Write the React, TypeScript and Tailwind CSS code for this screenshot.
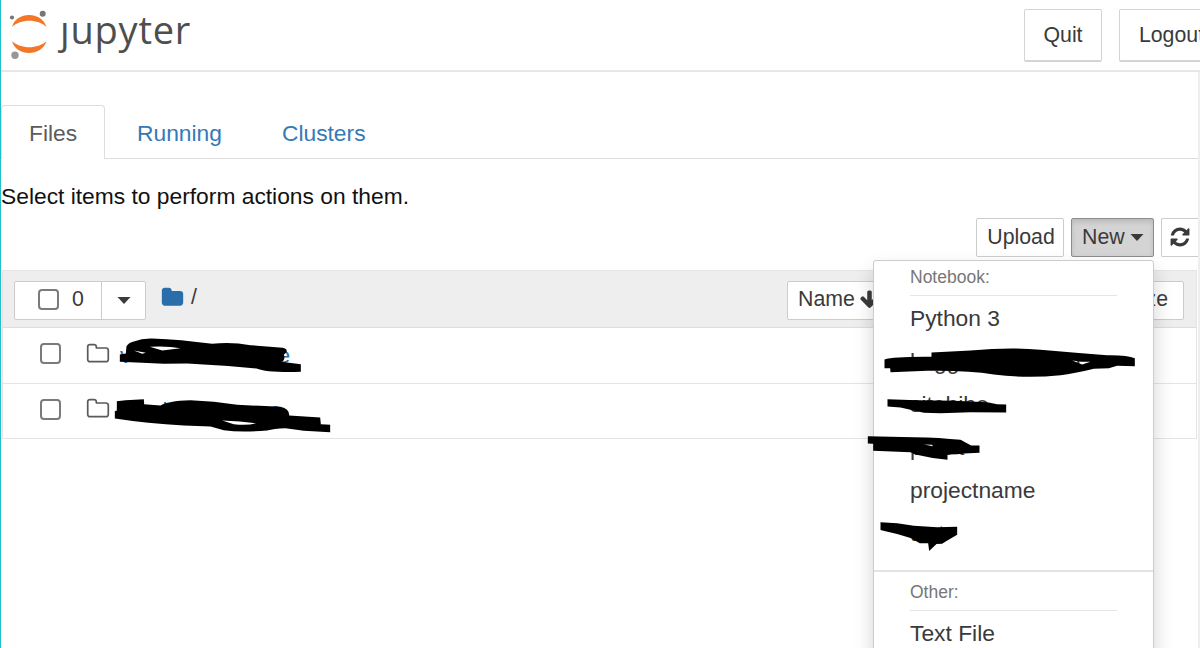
import type { ReactNode } from 'react';

/* ---------- icons ---------- */

const ICONS = {
  folder:
    'M1728 608v704q0 92-66 158t-158 66h-1216q-92 0-158-66t-66-158v-960q0-92 66-158t158-66h320q92 0 158 66t66 158v32h672q92 0 158 66t66 158z',
  folderOutline:
    'M1600 1312v-704q0-40-28-68t-68-28h-704q-40 0-68-28t-28-68v-64q0-40-28-68t-68-28h-320q-40 0-68 28t-28 68v960q0 40 28 68t68 28h1216q40 0 68-28t28-68zm128-704v704q0 92-66 158t-158 66h-1216q-92 0-158-66t-66-158v-960q0-92 66-158t158-66h320q92 0 158 66t66 158v32h672q92 0 158 66t66 158z',
  refresh:
    'M1639 1056q0 5-1 7-64 268-268 434.5t-478 166.5q-146 0-282.5-55t-243.5-157l-129 129q-19 19-45 19t-45-19-19-45v-448q0-26 19-45t45-19h448q26 0 45 19t19 45-19 45l-137 137q71 66 161 102t187 36q134 0 250-65t186-179q11-17 53-117 8-23 30-23h192q13 0 22.5 9.5t9.5 22.5zm25-800v448q0 26-19 45t-45 19h-448q-26 0-45-19t-19-45 19-45l138-138q-148-137-349-137-134 0-250 65t-186 179q-11 17-53 117-8 23-30 23h-199q-13 0-22.5-9.5t-9.5-22.5v-7q65-268 270-434.5t480-166.5q146 0 284 55.5t245 156.5l130-129q19-19 45-19t45 19 19 45z',
  arrowDown:
    'M1675 832q0 53-37 90l-651 652q-39 37-91 37-53 0-90-37l-651-652q-38-36-38-90 0-53 38-91l74-75q39-37 91-37 53 0 90 37l294 294v-704q0-52 38-90t90-38h128q52 0 90 38t38 90v704l294-294q37-37 90-37 52 0 91 37l75 75q37 39 37 91z',
};

function Icon({ name, className }: { name: keyof typeof ICONS; className: string }) {
  return (
    <svg viewBox="0 0 1792 1792" fill="currentColor" className={`shrink-0 ${className}`} aria-hidden="true">
      <path d={ICONS[name]} />
    </svg>
  );
}

function Caret() {
  return (
    <svg viewBox="0 0 14 7" className="w-3.5 h-[7px] shrink-0" fill="currentColor" aria-hidden="true">
      <path d="M0.500 0h13L7 7z" />
    </svg>
  );
}

function Checkbox() {
  return <span className="block size-[21px] shrink-0 rounded-[4px] border-2 border-[#7b7b7b] bg-white" />;
}

function Logo() {
  return (
    <div className="flex">
      <svg viewBox="1 0 48 60" className="w-12 h-[60px]" aria-hidden="true">
        <path d="M12 27C16 11 42 11 46.500 27C38 18.700 20.500 18.700 12 27z" fill="#f37726" />
        <path d="M12 41C20.500 49.300 38 49.300 46.500 41C42 57 16 57 12 41z" fill="#f37726" />
        <circle cx="12" cy="17.500" r="2.100" fill="#767677" />
        <circle cx="42.700" cy="13.800" r="3" fill="#767677" />
        <circle cx="15" cy="55.300" r="3.700" fill="#989798" />
      </svg>
      <span className="ml-[11px] mt-0.5 font-['Open_Sans','Noto_Sans'] text-[38px] leading-[54px] font-medium tracking-[0.8px] text-[#4e4e4e]">
        ȷupyter
      </span>
    </div>
  );
}

/* ---------- file list ---------- */

function Row({ children }: { children: ReactNode }) {
  return (
    <div className="flex h-[55.5px] items-center border-b-[1.5px] border-[#e4e4e4] pb-[3px] pl-[37px]">
      <Checkbox />
      <Icon name="folderOutline" className="ml-[25px] size-6 text-[#5a5a5a]" />
      <div className="ml-2.5 flex pt-0.5 text-[#296eaa]">{children}</div>
    </div>
  );
}

/* ---------- "New" dropdown ---------- */

function MenuHeader({ children }: { children: ReactNode }) {
  return (
    <div className="mx-9 h-[35px] border-b border-[#e5e5e5] text-[17.5px] leading-[33px] text-[#777]">{children}</div>
  );
}

function MenuItem({ children }: { children: ReactNode }) {
  return <div className="flex h-[43.2px] items-center pl-9">{children}</div>;
}

function NewMenu() {
  return (
    <div className="absolute top-[42px] -left-[198px] z-10 h-[420px] w-[281px] rounded-[3px] border border-[#ccc] bg-white text-[22.800px] text-[#3a3a3a] shadow-[0_10px_20px_rgba(0,0,0,0.175)]">
      <MenuHeader>Notebook:</MenuHeader>
      <MenuItem>Python 3</MenuItem>
      <MenuItem>
        <span>kagg</span>
        <span className="ml-[116px]">t</span>
      </MenuItem>
      <MenuItem>sitehibe</MenuItem>
      <MenuItem>
        <span>p</span>
        <span className="ml-[11px]">ro</span>
        <span className="ml-1">t</span>
      </MenuItem>
      <MenuItem>projectname</MenuItem>
      <MenuItem>
        <span>t</span>
        <span className="ml-[22px]">t</span>
      </MenuItem>
      <div className="mt-[15px] h-0.5 bg-[#e3e3e3]" />
      <div className="mt-1">
        <MenuHeader>Other:</MenuHeader>
      </div>
      <MenuItem>Text File</MenuItem>
    </div>
  );
}

/* ---------- black marker strokes over the private names ---------- */

function Marker() {
  return (
    <svg viewBox="0 0 1200 648" className="pointer-events-none absolute top-0 -left-px z-20 h-[648px] w-[1200px]" aria-hidden="true">
      <g transform="translate(70.500 329.500) scale(0.33333)" fillRule="evenodd">
        <path d="M148 75L166 72L168 50Q174 40 190 36Q215 26 245 27Q330 30 425 43Q480 36 540 47L636 55Q652 58 648 68L640 76Q646 92 632 97L691 104V127Q590 130 558 117Q450 107 350 102L280 103L148 97zM238 52Q290 49 330 56L275 63zM190 63L226 70L215 73z" />
        <path d="M139 215L165 212L220 209L221 224L270 228Q290 214 360 212Q430 214 500 226L630 232Q657 238 656 258L749 264L751 284L779 286V308L700 304L645 296Q610 297 590 303Q510 310 460 302L420 291L340 288Q230 282 133 267V245L139 243zM455 273Q510 275 557 281Q530 289 490 284z" />
      </g>
      <g transform="translate(860.500 334.500) scale(0.33333)" fillRule="evenodd">
        <path d="M72 75Q100 66 213 67V54L330 48Q450 37 540 46Q640 55 740 62Q800 61 823 71V95L770 94L745 101L700 103Q640 118 600 122Q500 133 400 120Q320 107 200 109L90 113L89 101H72zM635 78L662 82L690 82L665 90z" />
        <path d="M81 194L170 197L280 199L380 203L410 209L437 210V234L330 233L240 236L190 235L150 226L120 219L81 216z" />
        <path d="M22 305L160 308Q240 309 300 316L332 333H357V355L310 357L290 359L261 360V376Q210 371 165 360L150 353L38 349V328L22 327zM190 330L214 331L218 335z" />
      </g>
      <g transform="translate(860.500 460) scale(0.33333)">
        <path d="M60 187L110 190L160 197L230 202L290 200V224L258 243L245 251L228 252L206 273L203 250H178L150 234L110 222L75 214L60 210z" />
      </g>
    </svg>
  );
}

export default function App() {
  return (
    <div className="relative h-[648px] w-[1200px] overflow-hidden border-l border-[#20bfc9] bg-white font-['Liberation_Sans',sans-serif] text-[22.800px] whitespace-nowrap text-[#3a3a3a]">
      <header className="flex h-[72px] justify-between border-b-2 border-[#e7e7e7]">
        <Logo />
        <div className="mt-[9px] -mr-5 flex h-[53px] gap-[17px] text-[21.300px]">
          <button className="w-[78px] rounded-[2px] border border-b-2 border-[#d4d4d4] pt-0.5">Quit</button>
          <button className="w-[101px] rounded-[2px] border border-b-2 border-[#d4d4d4] pt-0.5 pl-1">Logout</button>
        </div>
      </header>

      <main className="h-[576px] border-r-2 border-[#eee] pt-[33px]">
        <nav className="flex h-[54px] border-b border-[#ddd]">
          <div className="h-[54px] w-[104px] rounded-t-[4px] border border-b-0 border-[#ddd] bg-white pl-[27px] leading-[55px] text-[#5c5c5c]">
            Files
          </div>
          <div className="ml-8 leading-[57px] text-[#337ab7]">Running</div>
          <div className="ml-[60px] leading-[57px] text-[#337ab7]">Clusters</div>
        </nav>

        <p className="mt-[22px] h-[30px] leading-[30px] text-[#111]">Select items to perform actions on them.</p>

        <div className="mt-[7px] flex h-[39px] justify-end gap-[7px] text-[21.300px]">
          <button className="w-[88px] rounded-[2px] border border-[#ccc] pl-0.5">Upload</button>
          <div className="relative">
            <button className="flex h-full w-[83px] items-center gap-[5px] rounded-[2px] border border-[#8c8c8c] bg-[#d4d4d4] pl-2.5 shadow-[inset_0_3px_5px_rgba(0,0,0,0.125)]">
              New <Caret />
            </button>
            <NewMenu />
          </div>
          <button className="flex w-[37px] items-center rounded-l-[2px] border border-r-0 border-[#ccc] pb-0.5 pl-[7px]">
            <Icon name="refresh" className="size-[22px]" />
          </button>
        </div>

        <section className="mt-[13px] ml-px mr-px h-[169px] border border-b-0 border-[#e4e4e4]">
          <div className="flex h-[57px] items-center border-b border-[#ddd] bg-[#eee] text-[21.300px]">
            <div className="ml-[11px] mt-0.5 flex h-[39px] rounded-[2px] border border-[#ccc] bg-white">
              <div className="flex w-[87px] items-center border-r border-[#ccc] pb-px pl-[23px]">
                <Checkbox />
                <span className="ml-[13px]">0</span>
              </div>
              <div className="flex w-[43px] items-center justify-center pt-px">
                <Caret />
              </div>
            </div>
            <Icon name="folder" className="mb-[3px] ml-[15px] size-[23px] text-[#296eaa]" />
            <span className="mb-0.5 ml-[7px]">/</span>
            <div className="mt-0.5 ml-auto mr-3 flex h-[39px] w-[397px] items-center justify-between rounded-[2px] border border-[#ccc] bg-white pr-[15px] pb-px pl-2.5">
              <span className="flex items-center gap-1">
                Name <Icon name="arrowDown" className="size-[21px]" />
              </span>
              <span>File size</span>
            </div>
          </div>
          <Row>
            <span>v</span>
            <span className="ml-[146px]">e</span>
          </Row>
          <Row>
            <span className="ml-[31px]">vi</span>
            <span className="ml-[70px]">ame</span>
          </Row>
        </section>
      </main>

      <Marker />
    </div>
  );
}
